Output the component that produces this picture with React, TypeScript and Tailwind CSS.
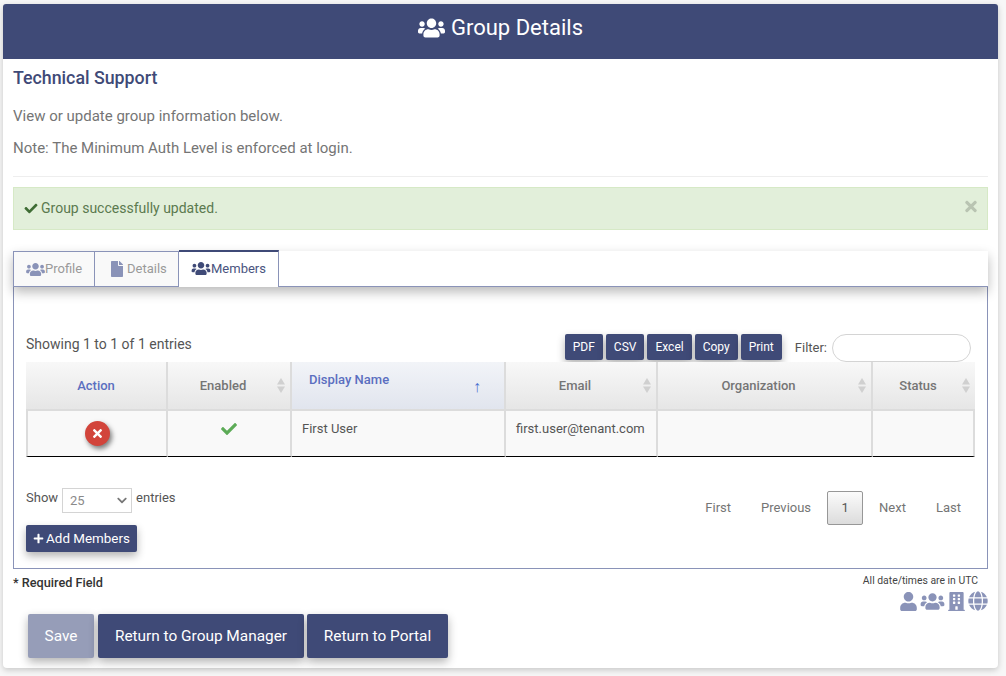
import React from 'react';
import { FaBuilding, FaCheck, FaChevronDown, FaFile, FaGlobe, FaPlus, FaTimes, FaUser, FaUsers } from 'react-icons/fa';

const SortIcon = () => (
  <svg viewBox="0 0 8 15" className="absolute right-[5px] top-[16px] h-[15px] w-[8px] fill-[#d0d0d0]">
    <path d="M4 0 8 6.5H0Z" />
    <path d="M4 15 0 8.500H8Z" />
  </svg>
);

const HeadCell = ({ label, last }: { label: string; last?: boolean }) => (
  <th className={`relative border-b-2 border-[#dcdcdc] bg-gradient-to-b from-[#f8f8f8] to-[#e6e6e6] pr-[12px] text-center text-[13px] font-medium text-[#757575] ${last ? '' : 'border-r-2'}`}>
    {label}
    <SortIcon />
  </th>
);

const ExportButton = ({ label }: { label: string }) => (
  <button className="h-[26px] rounded-[2px] bg-[#3f4a77] px-[8px] text-[12px] text-white shadow-[0_4px_8px_rgba(0,0,0,0.3)]">{label}</button>
);

const PageLink = ({ label, className }: { label: string; className: string }) => (
  <span className={`text-[13px] text-[#757575] ${className}`}>{label}</span>
);

const ActionButton = ({ label, className }: { label: string; className: string }) => (
  <button className={`h-[44px] rounded-[2px] pt-[1px] text-[15.400px] text-white shadow-[0_4px_10px_rgba(0,0,0,0.3)] ${className}`}>{label}</button>
);

export default function App() {
  return (
    <div className="h-[676px] w-[1006px] overflow-hidden bg-[#f7f7f7] pl-[3px] pt-[4px] font-[Roboto,sans-serif]">
      <div className="h-[664px] w-[995px] rounded-[4px] bg-white shadow-[0_2px_6px_rgba(0,0,0,0.2)]">
        <header className="flex h-[55px] items-center justify-center gap-[6px] rounded-t-[3px] bg-[#3f4a77] pb-[8px] text-[22px] text-white">
          <FaUsers className="h-[22px] w-[27px]" />
          <span>Group Details</span>
        </header>

        <div className="px-[10px]">
          <h2 className="mt-[7px] text-[17.800px] font-medium leading-[24px] text-[#3f4a77]">Technical Support</h2>
          <p className="mt-[15px] text-[15px] leading-[22px] text-[#757575]">View or update group information below.</p>
          <p className="mt-[10px] text-[15px] leading-[22px] text-[#757575]">Note: The Minimum Auth Level is enforced at login.</p>
          <div className="mt-[17px] h-px bg-[#eeeeee]" />

          <div className="mt-[10px] flex h-[43px] w-[975px] items-center justify-between border border-[#d6e9c6] bg-[#e2efda] pl-[10px] pr-[10px] text-[14px] text-[#5b7a4f]">
            <span className="flex items-center gap-[3px]">
              <FaCheck className="h-[13px] w-[14px] text-[#3f6d35]" />
              Group successfully updated.
            </span>
            <FaTimes className="mb-[5px] h-[17px] w-[12px] text-[#b9c4b2]" />
          </div>

          <div className="relative z-10 mt-[21px] flex h-[36px] w-[975px] items-start border-b border-[#8a93b8] bg-white shadow-[0_5px_12px_rgba(0,0,0,0.28)]">
            <div className="flex h-[35px] w-[82px] items-center border border-b-0 border-[#8a93b8] bg-[#f9f9f9] pl-[12px] text-[13px] text-[#9a9a9a]">
              <FaUsers className="h-[15px] w-[19px] text-[#8a93b8]" />
              Profile
            </div>
            <div className="flex h-[35px] w-[84px] items-center gap-[4px] border-r border-t border-[#8a93b8] bg-[#f9f9f9] pl-[16px] text-[13px] text-[#9a9a9a]">
              <FaFile className="h-[16px] w-[12px] text-[#8a93b8]" />
              Details
            </div>
            <div className="-mt-px flex h-[37px] w-[100px] items-center border-r border-t-2 border-[#3f4a77] border-r-[#8a93b8] bg-white pb-[2px] pl-[12px] text-[13px] text-[#4a5480]">
              <FaUsers className="h-[15px] w-[20px] text-[#3f4a77]" />
              Members
            </div>
          </div>

          <div className="h-[282px] w-[975px] border border-t-0 border-[#8a93b8] px-[12px] pt-[47px]">
            <div className="flex h-[28px] w-[949px]">
              <span className="mt-[2px] text-[14px] leading-[16px] text-[#555555]">Showing 1 to 1 of 1 entries</span>
              <div className="ml-auto flex items-start gap-[3px]">
                <ExportButton label="PDF" />
                <ExportButton label="CSV" />
                <ExportButton label="Excel" />
                <ExportButton label="Copy" />
                <ExportButton label="Print" />
              </div>
              <span className="ml-[13px] mt-[6px] text-[13px] leading-[16px] text-[#555555]">Filter:</span>
              <input className="ml-[5px] mr-[4px] h-[28px] w-[139px] rounded-full border border-[#d4d4d4] bg-white" />
            </div>

            <table className="w-[949px] table-fixed border-separate border-spacing-0">
              <colgroup>
                <col className="w-[142px]" />
                <col className="w-[124px]" />
                <col className="w-[214px]" />
                <col className="w-[152px]" />
                <col className="w-[215px]" />
                <col className="w-[102px]" />
              </colgroup>
              <thead>
                <tr className="h-[49px]">
                  <th className="border-b-2 border-r-2 border-[#dcdcdc] bg-gradient-to-b from-[#f8f8f8] to-[#e6e6e6] text-center text-[13px] font-medium text-[#5b6fc0]">Action</th>
                  <HeadCell label="Enabled" />
                  <th className="relative border-b-2 border-r-2 border-[#dcdcdc] bg-gradient-to-b from-[#f2f4f8] to-[#e1e5ee] pb-[12px] pl-[17px] text-left text-[13px] font-medium text-[#5b6fc0]">
                    Display Name
                    <span className="absolute right-[23px] top-[13px] text-[16px] font-normal text-[#4a6fd0]">↑</span>
                  </th>
                  <HeadCell label="Email" />
                  <HeadCell label="Organization" />
                  <HeadCell label="Status" last />
                </tr>
              </thead>
              <tbody>
                <tr className="h-[46px] bg-[#f9f9f9] text-[13px] text-[#555555]">
                  <td className="border-b border-l-2 border-r-2 border-[#dcdcdc] border-b-black">
                    <div className="mx-auto flex h-[25px] w-[25px] items-center justify-center rounded-full bg-[#d2443b] text-white shadow-[2px_3px_5px_rgba(0,0,0,0.5)]">
                      <FaTimes className="h-[13px] w-[9px]" />
                    </div>
                  </td>
                  <td className="border-b border-r-2 border-[#dcdcdc] border-b-black">
                    <FaCheck className="mb-[10px] ml-[51px] h-[16px] w-[20px] text-[#5cab57]" />
                  </td>
                  <td className="border-b border-r-2 border-[#dcdcdc] border-b-black pb-[10px] pl-[10px]">First User</td>
                  <td className="border-b border-r-2 border-[#dcdcdc] border-b-black pb-[10px] pl-[10px]">first.user@tenant.com</td>
                  <td className="border-b border-r-2 border-[#dcdcdc] border-b-black" />
                  <td className="border-b border-r-2 border-[#dcdcdc] border-b-black" />
                </tr>
              </tbody>
            </table>

            <div className="mt-[31px] flex w-[949px] items-start justify-between">
              <div className="text-[13px] leading-[16px] text-[#555555]">
                <div className="flex h-[25px] items-start">
                  <span className="mt-[2px]">Show</span>
                  <div className="ml-[4px] flex h-[25px] w-[70px] items-center justify-between border border-[#d4d4d4] pl-[7px] pr-[3px] text-[13px] text-[#8a8a8a]">
                    25
                    <FaChevronDown className="mr-[1px] h-[11px] w-[10px] text-[#777777]" />
                  </div>
                  <span className="ml-[4px] mt-[2px]">entries</span>
                </div>
                <button className="mt-[12px] flex h-[27px] w-[111px] items-center justify-center gap-[2px] rounded-[2px] bg-[#3f4a77] text-[13.400px] text-white shadow-[0_4px_8px_rgba(0,0,0,0.3)]">
                  <FaPlus className="h-[11px] w-[11px]" />
                  Add Members
                </button>
              </div>
              <div className="mr-[14px] mt-[3px] flex items-center">
                <PageLink label="First" className="" />
                <PageLink label="Previous" className="ml-[30px]" />
                <span className="ml-[16px] flex h-[34px] w-[36px] items-center justify-center rounded-[2px] border border-[#979797] bg-gradient-to-b from-[#fbfbfb] to-[#dcdcdc] text-[13px] text-[#555555]">1</span>
                <PageLink label="Next" className="ml-[16px]" />
                <PageLink label="Last" className="ml-[30px]" />
              </div>
            </div>
          </div>

          <div className="flex w-[975px] items-start justify-between">
            <span className="mt-[6px] text-[12.700px] font-medium leading-[15px] text-[#333333]">* Required Field</span>
            <div className="flex flex-col items-end">
              <span className="mr-[10px] mt-[6px] text-[10.400px] leading-[12px] text-[#444444]">All date/times are in UTC</span>
              <div className="mt-[4px] flex items-center gap-[3px] text-[#8a93b8]">
                <FaUser className="h-[19px] w-[17px]" />
                <FaUsers className="h-[19px] w-[25px]" />
                <FaBuilding className="h-[19px] w-[17px]" />
                <FaGlobe className="h-[20px] w-[20px]" />
              </div>
            </div>
          </div>

          <div className="ml-[15px] mt-[3px] flex gap-[3px]">
            <ActionButton label="Save" className="mr-px w-[66px] bg-[#969db8]" />
            <ActionButton label="Return to Group Manager" className="w-[206px] bg-[#3f4a77]" />
            <ActionButton label="Return to Portal" className="w-[141px] bg-[#3f4a77]" />
          </div>
        </div>
      </div>
    </div>
  );
}
